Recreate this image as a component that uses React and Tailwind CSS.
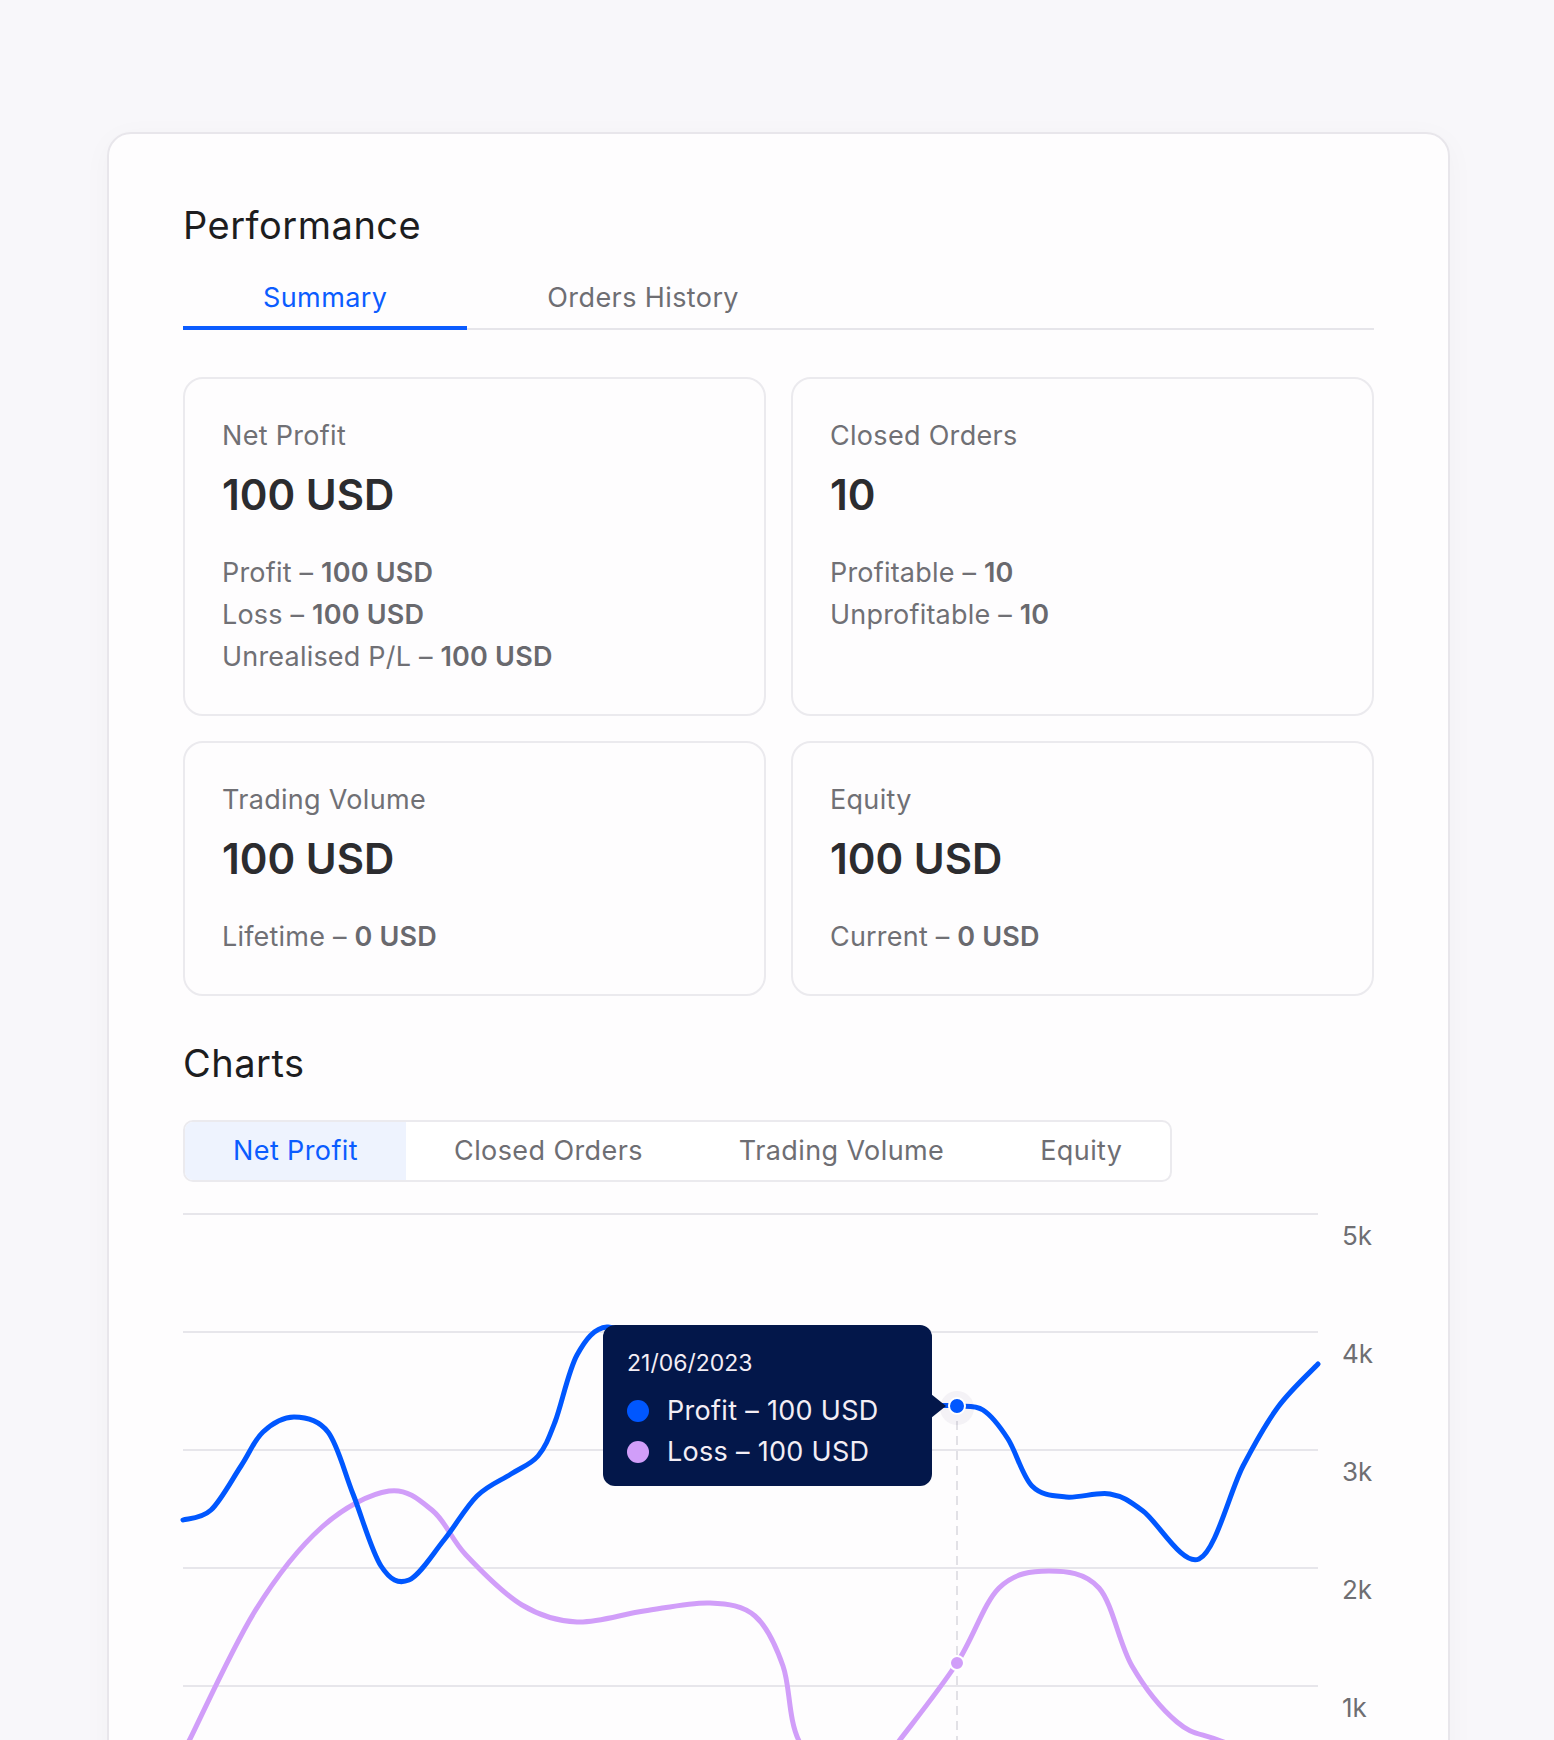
import React from 'react';

const stats = [
  {
    label: 'Net Profit',
    value: '100 USD',
    rows: [
      ['Profit', '100 USD'],
      ['Loss', '100 USD'],
      ['Unrealised P/L', '100 USD'],
    ],
  },
  {
    label: 'Closed Orders',
    value: '10',
    rows: [
      ['Profitable', '10'],
      ['Unprofitable', '10'],
    ],
  },
  { label: 'Trading Volume', value: '100 USD', rows: [['Lifetime', '0 USD']] },
  { label: 'Equity', value: '100 USD', rows: [['Current', '0 USD']] },
];

const chartTabs = ['Net Profit', 'Closed Orders', 'Trading Volume', 'Equity'];
const yLabels = ['5k', '4k', '3k', '2k', '1k'];

// curve points in chart pixels (top gridline = y 0)
const profitPts = [
  [0, 306], [28, 296], [58, 252], [80, 218], [111, 203], [145, 218], [170, 280], [198, 352], [226, 366],
  [261, 326], [294, 282], [328, 260], [355, 242], [372, 208], [394, 141], [424, 113],
  [470, 135], [560, 165], [680, 185], [750, 191], [774, 192], [800, 196], [825, 225], [849, 272],
  [883, 283], [927, 280], [960, 297], [1016, 345], [1060, 252], [1095, 193], [1135, 150],
];

const lossPts = [
  [6, 527], [72, 397], [139, 313], [206, 277], [250, 297], [283, 341], [339, 391],
  [394, 408], [461, 397], [527, 389], [572, 402], [600, 452], [616, 527], [666, 590],
  [716, 527], [774, 449], [816, 374], [866, 357], [916, 374], [949, 452], [994, 508],
  [1038, 527], [1135, 560],
];

function smoothPath(pts) {
  let d = `M ${pts[0][0]} ${pts[0][1]}`;
  for (let i = 0; i < pts.length - 1; i++) {
    const p0 = pts[i - 1] || pts[i];
    const p1 = pts[i];
    const p2 = pts[i + 1];
    const p3 = pts[i + 2] || p2;
    const c1x = p1[0] + (p2[0] - p0[0]) / 6;
    const c1y = p1[1] + (p2[1] - p0[1]) / 6;
    const c2x = p2[0] - (p3[0] - p1[0]) / 6;
    const c2y = p2[1] - (p3[1] - p1[1]) / 6;
    d += ` C ${c1x} ${c1y} ${c2x} ${c2y} ${p2[0]} ${p2[1]}`;
  }
  return d;
}

function StatCard({ stat }) {
  return (
    <div className="rounded-[20px] border-2 border-[#ebeaee] bg-[#fefdfe] px-[37px] pt-[41px] pb-[36px]">
      <p className="text-[27px] leading-[32px] tracking-[0.3px] text-[#707075]">{stat.label}</p>
      <p className="mt-[19px] text-[42px] leading-[48px] font-semibold text-[#2c2c2f]">{stat.value}</p>
      <div className="mt-[33px]">
        {stat.rows.map(([name, val]) => (
          <p key={name} className="text-[27px] leading-[42px] tracking-[0.2px] text-[#707075]">
            {name} – <span className="font-semibold text-[#69696e]">{val}</span>
          </p>
        ))}
      </div>
    </div>
  );
}

function Chart() {
  return (
    <div className="relative mt-[31px] flex">
      <svg width="1135" height="600" viewBox="0 -1 1135 600" className="overflow-visible">
        {[0, 118, 236, 354, 472, 590].map((y) => (
          <line key={y} x1="0" x2="1135" y1={y} y2={y} stroke="#e7e6eb" strokeWidth="2" />
        ))}
        <line x1="774" x2="774" y1="192" y2="600" stroke="#e2e1e6" strokeWidth="2" strokeDasharray="9 6" />
        <path d={smoothPath(lossPts)} fill="none" stroke="#d19ef9" strokeWidth="5" strokeLinecap="round" />
        <path d={smoothPath(profitPts)} fill="none" stroke="#0057ff" strokeWidth="5" strokeLinecap="round" />
        <circle cx="774" cy="194" r="17" fill="#3a3060" opacity="0.05" />
        <circle cx="774" cy="192" r="8" fill="#0057ff" stroke="#ffffff" strokeWidth="2" />
        <circle cx="774" cy="449" r="7" fill="#d19ef9" stroke="#ffffff" strokeWidth="2" />
      </svg>

      <div className="ml-[24px] flex flex-col pt-[7px]">
        {yLabels.map((l) => (
          <div key={l} className="h-[118px] text-[26px] leading-[32px] text-[#6e6e72]">
            {l}
          </div>
        ))}
      </div>

      {/* tooltip */}
      <div className="absolute left-[420px] top-[112px] w-[329px] rounded-[12px] bg-[#03174a] pl-[24px] pt-[24px] pb-[14px] text-[#f3eef5]">
        <div className="absolute right-[-14px] top-[69px] h-0 w-0 border-y-[12px] border-l-[15px] border-y-transparent border-l-[#03174a]" />
        <p className="text-[23px] leading-[28px]">21/06/2023</p>
        <div className="mt-[13px]">
          <div className="flex items-center gap-[18px] text-[27px] leading-[41px] tracking-[0.3px]">
            <span className="h-[22px] w-[22px] rounded-full bg-[#0057ff]" />
            Profit – 100 USD
          </div>
          <div className="flex items-center gap-[18px] text-[27px] leading-[41px] tracking-[0.3px]">
            <span className="h-[22px] w-[22px] rounded-full bg-[#d19ef9]" />
            Loss – 100 USD
          </div>
        </div>
      </div>
    </div>
  );
}

export default function App() {
  return (
    <div className="min-h-screen bg-[#f8f7fa] pl-[107px] pt-[132px] font-['Inter','Noto_Sans',sans-serif]">
      <div className="w-[1343px] rounded-[24px] border-2 border-[#e8e6eb] bg-[#fefdfe] px-[74px] pt-[69px] pb-[80px] shadow-[0_6px_30px_rgba(30,20,60,0.03)]">
        <h1 className="text-[38px] leading-[44px] tracking-[0.5px] text-[#1d1d1f]">Performance</h1>

        {/* Summary tabs */}
        <div className="mt-[35px] flex border-b-2 border-[#e6e5ea]">
          <button className="-mb-[2px] border-b-4 border-[#0b5cff] px-[80px] pb-[12px] text-[27px] leading-[32px] tracking-[0.4px] text-[#0b5cff]">
            Summary
          </button>
          <button className="-mb-[2px] border-b-4 border-transparent px-[80px] pb-[12px] text-[27px] leading-[32px] tracking-[0.4px] text-[#6e6e73]">
            Orders History
          </button>
        </div>

        <div className="mt-[47px] grid grid-cols-2 gap-x-[25px] gap-y-[25px]">
          {stats.map((s) => (
            <StatCard key={s.label} stat={s} />
          ))}
        </div>

        <h2 className="mt-[45px] text-[38px] leading-[44px] tracking-[0.5px] text-[#1d1d1f]">Charts</h2>

        <div className="mt-[35px] inline-flex h-[62px] rounded-[10px] border-2 border-[#ebeaee] bg-white">
          {chartTabs.map((t, i) => (
            <button
              key={t}
              className={
                i === 0
                  ? 'flex items-center rounded-l-[8px] bg-[#eef3fe] px-[48px] text-[27px] leading-[32px] tracking-[0.4px] text-[#0b5cff]'
                  : 'flex items-center px-[48px] text-[27px] leading-[32px] tracking-[0.4px] text-[#6e6e73]'
              }
            >
              {t}
            </button>
          ))}
        </div>

        <Chart />
      </div>
    </div>
  );
}
